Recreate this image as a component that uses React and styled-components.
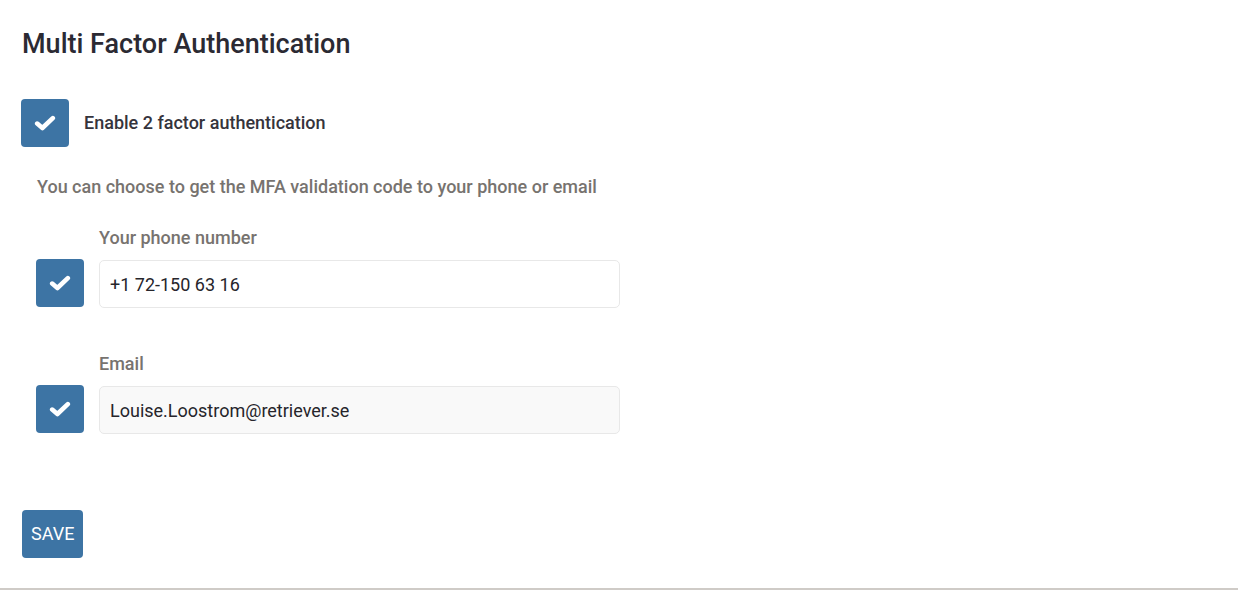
import React from "react";
import styled, { createGlobalStyle } from "styled-components";

const Global = createGlobalStyle`
  html, body { margin: 0; padding: 0; background: #fff; }
  body { font-family: Roboto, "Noto Sans", Arial, sans-serif; }
  * { box-sizing: border-box; }
`;

const Page = styled.div`
  height: 590px;
  border-bottom: 2px solid #cfcbc7;
  padding: 28px 21px 0 21px;
  display: flex;
  flex-direction: column;
`;

const Title = styled.h2`
  margin: 0 0 39px 1px;
  font-size: 27px;
  line-height: 32px;
  font-weight: 500;
  color: #2b2a33;
`;

const Row = styled.label`
  display: flex;
  align-items: ${(p) => p.$align || "flex-start"};
  gap: 15px;
`;

const Box = styled.span`
  width: 48px;
  height: 48px;
  flex: none;
  border-radius: 4px;
  background: #3d74a4;
  display: flex;
  align-items: center;
  justify-content: center;
`;

const MainLabel = styled.span`
  font-size: 18px;
  line-height: 22px;
  padding-bottom: 1px;
  font-weight: 500;
  color: #35343c;
`;

const Section = styled.div`
  padding-left: 15px;
  display: flex;
  flex-direction: column;
`;

const Hint = styled.p`
  margin: 30px 0 31px 1px;
  font-size: 18px;
  line-height: 20px;
  font-weight: 500;
  color: #77736f;
`;

const Field = styled.div`
  display: flex;
  flex-direction: column;
  margin-bottom: ${(p) => p.$mb || 0}px;
`;

const FieldLabel = styled.div`
  margin: 0 0 11px 63px;
  font-size: 18px;
  line-height: 20px;
  font-weight: 500;
  color: #77736f;
`;

const Input = styled.input`
  width: 521px;
  height: 48px;
  margin-top: 1px;
  padding: 0 10px;
  border: 1px solid #e8e8e8;
  border-radius: 5px;
  background: ${(p) => (p.disabled ? "#f9f9f9" : "#fff")};
  font-family: Roboto, "Noto Sans", Arial, sans-serif;
  font-size: 18px;
  color: #26252b;
  outline: none;
  &:disabled { color: #26252b; }
`;

const Save = styled.button`
  margin-top: 76px;
  margin-left: 1px;
  align-self: flex-start;
  height: 48px;
  padding: 0 9px 2px;
  border: none;
  border-radius: 4px;
  background: #3d74a4;
  color: #fff;
  font-family: Roboto, "Noto Sans", Arial, sans-serif;
  font-size: 18px;
  font-weight: 400;
  text-transform: uppercase;
  cursor: pointer;
`;

const Check = () => (
  <svg width="22" height="16" viewBox="0 0 22 16" aria-hidden="true">
    <polyline
      points="3.2,8.6 8.4,13 18.8,3.2"
      fill="none"
      stroke="#fff"
      strokeWidth="4.6"
      strokeLinecap="round"
      strokeLinejoin="round"
    />
  </svg>
);

export default function App() {
  return (
    <>
      <Global />
      <Page>
        <Title>Multi Factor Authentication</Title>
        <Row $align="center">
          <Box><Check /></Box>
          <MainLabel>Enable 2 factor authentication</MainLabel>
        </Row>
        <Section>
          <Hint>You can choose to get the MFA validation code to your phone or email</Hint>
          <Field $mb={46}>
            <FieldLabel>Your phone number</FieldLabel>
            <Row>
              <Box><Check /></Box>
              <Input defaultValue="+1 72-150 63 16" />
            </Row>
          </Field>
          <Field>
            <FieldLabel>Email</FieldLabel>
            <Row>
              <Box><Check /></Box>
              <Input disabled defaultValue="Louise.Loostrom@retriever.se" />
            </Row>
          </Field>
        </Section>
        <Save>Save</Save>
      </Page>
    </>
  );
}
